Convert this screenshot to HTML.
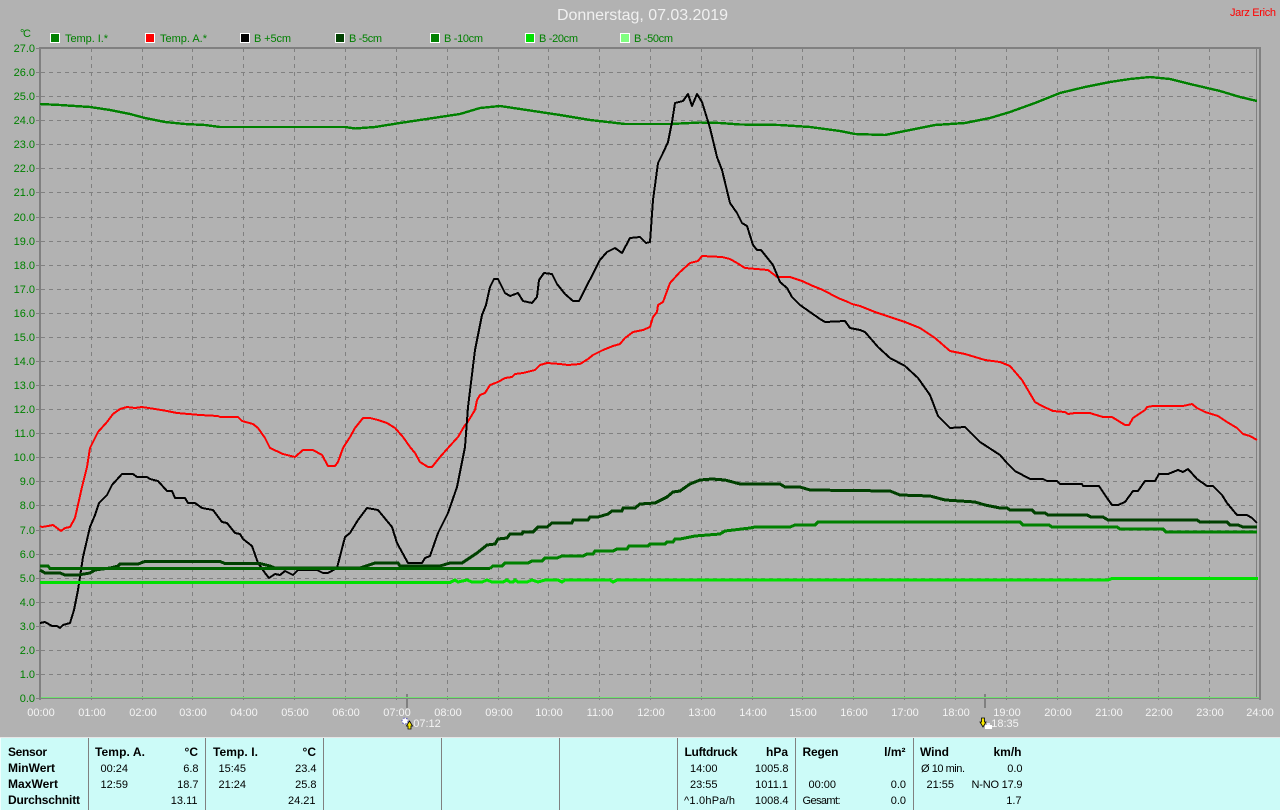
<!DOCTYPE html>
<html>
<head>
<meta charset="utf-8">
<title>Donnerstag, 07.03.2019</title>
<style>
html,body{margin:0;padding:0;width:1280px;height:810px;overflow:hidden;background:#b2b2b2}
svg{display:block;position:absolute;left:0;top:0}
text{font-family:"Liberation Sans",sans-serif;font-size:11px}
.y{fill:#008000;text-anchor:end}
.x{fill:#f4f4f4;text-anchor:middle}
.l{fill:#008000}
.b{font-weight:bold;fill:#000;font-size:12px}
.t{fill:#000}
.r{fill:#000;text-anchor:end}
.br{font-weight:bold;fill:#000;text-anchor:end;font-size:12px}
.c{fill:none;stroke-linejoin:round;shape-rendering:crispEdges}
</style>
</head>
<body>
<svg width="1280" height="810" viewBox="0 0 1280 810" xmlns="http://www.w3.org/2000/svg">
<rect width="1280" height="810" fill="#b2b2b2"/>

<!-- title -->
<text x="557" y="20" textLength="171" style="font-size:16px" fill="#f0f0f0">Donnerstag, 07.03.2019</text>
<text x="1230" y="16" textLength="46" fill="#ff0000">Jarz Erich</text>
<text x="20" y="37" textLength="11" fill="#008000">°C</text>

<!-- legend -->
<g stroke="#fff" stroke-width="1" shape-rendering="crispEdges">
<rect x="50.5" y="33.5" width="9" height="9" fill="#008000"/>
<rect x="145.5" y="33.5" width="9" height="9" fill="#ff0000"/>
<rect x="240.5" y="33.5" width="9" height="9" fill="#000000"/>
<rect x="335.5" y="33.5" width="9" height="9" fill="#004000"/>
<rect x="430.5" y="33.5" width="9" height="9" fill="#008000"/>
<rect x="525.5" y="33.5" width="9" height="9" fill="#00e000"/>
<rect x="620.5" y="33.5" width="9" height="9" fill="#80ff80"/>
</g>
<text class="l" x="65" y="42" textLength="43">Temp. I.*</text>
<text class="l" x="160" y="42" textLength="47">Temp. A.*</text>
<text class="l" x="254" y="42" textLength="37">B +5cm</text>
<text class="l" x="349" y="42" textLength="33">B -5cm</text>
<text class="l" x="444" y="42" textLength="39">B -10cm</text>
<text class="l" x="539" y="42" textLength="39">B -20cm</text>
<text class="l" x="634" y="42" textLength="39">B -50cm</text>

<!-- grid -->
<path shape-rendering="crispEdges" stroke="#808080" stroke-width="1" stroke-dasharray="4 4" fill="none" d="M41 72.5H1257M41 96.5H1257M41 120.5H1257M41 144.5H1257M41 168.5H1257M41 192.5H1257M41 217.5H1257M41 241.5H1257M41 265.5H1257M41 289.5H1257M41 313.5H1257M41 337.5H1257M41 361.5H1257M41 385.5H1257M41 409.5H1257M41 433.5H1257M41 457.5H1257M41 481.5H1257M41 505.5H1257M41 530.5H1257M41 554.5H1257M41 578.5H1257M41 602.5H1257M41 626.5H1257M41 650.5H1257M41 674.5H1257"/>
<path shape-rendering="crispEdges" stroke="#808080" stroke-width="1" stroke-dasharray="4 4" fill="none" d="M91.5 48V704M142.5 48V704M192.5 48V704M243.5 48V704M294.5 48V704M345.5 48V704M396.5 48V704M447.5 48V704M498.5 48V704M548.5 48V704M599.5 48V704M650.5 48V704M701.5 48V704M752.5 48V704M802.5 48V704M853.5 48V704M904.5 48V704M955.5 48V704M1006.5 48V704M1057.5 48V704M1108.5 48V704M1158.5 48V704M1209.5 48V704"/>
<!-- y ticks -->
<path shape-rendering="crispEdges" stroke="#808080" fill="none" d="M36 48.5H40M36 72.5H40M36 96.5H40M36 120.5H40M36 144.5H40M36 168.5H40M36 192.5H40M36 217.5H40M36 241.5H40M36 265.5H40M36 289.5H40M36 313.5H40M36 337.5H40M36 361.5H40M36 385.5H40M36 409.5H40M36 433.5H40M36 457.5H40M36 481.5H40M36 505.5H40M36 530.5H40M36 554.5H40M36 578.5H40M36 602.5H40M36 626.5H40M36 650.5H40M36 674.5H40M36 698.5H40"/>
<!-- frame -->
<g shape-rendering="crispEdges" fill="#808080">
<rect x="39" y="47" width="1222" height="2"/>
<rect x="39" y="47" width="2" height="653"/>
<rect x="1259" y="47" width="2" height="653"/>
<rect x="1256" y="48" width="1" height="650"/>
<rect x="39" y="698" width="1222" height="1"/>
<rect x="406" y="694" width="2" height="14"/>
<rect x="984" y="694" width="2" height="14"/>
</g>

<!-- curves -->
<polyline class="c" stroke="#008000" stroke-width="2.4" points="40,104 60,105 75,106 90,107 110,110 130,114 145,118 165,122 185,124 205,125 220,127 345,127 355,128.5 375,127 400,123 420,120 440,117 460,114 480,108 500,106 520,109 540,112 560,115 590,120 625,124 670,124 700,122.5 720,123 740,124.5 780,125 810,127 840,131 855,134 885,135 905,131 935,125 965,123 990,118 1010,112 1035,103 1060,93 1085,87 1110,82 1130,79 1150,77 1170,79 1190,84 1220,91 1240,97 1257,101"/>
<polyline class="c" stroke="#ff0000" stroke-width="2" points="40,526 42,527 48,526 53,525 61,531 65,528 70,527 75,518 82,487 87,467 90,448 98,432 107,422 113,414 120,409 127,407 135,408 142,407 155,409 167,411 177,413 200,415 218,416 220,417 238,417 242,421 253,424 258,428 265,438 270,448 283,454 295,457 303,450 313,450 322,455 328,466 335,466 338,462 343,448 350,437 355,428 363,418 370,418 378,420 387,423 395,428 403,437 410,447 415,453 420,462 428,467 432,467 440,457 448,448 458,437 465,425 467,423 475,410 477,400 480,395 485,393 490,385 498,382 505,378 512,377 515,374 523,373 535,370 540,365 547,363 560,364 568,365 580,364 588,359 593,355 603,350 613,346 620,344 625,338 633,332 643,330 650,327 653,317 657,312 658,305 663,302 670,283 680,272 690,263 698,261 702,256 722,257 730,259 737,263 745,268 768,270 777,277 790,277 802,281 813,286 823,290 838,298 848,302 852,304 860,306 875,312 890,317 905,322 920,328 935,338 950,351 965,354 985,360 1000,362 1010,366 1022,380 1035,402 1042,406 1053,411 1065,412 1068,414 1075,413 1090,413 1093,414 1103,417 1112,417 1125,425 1129,425 1133,418 1145,410 1147,407 1153,406 1183,406 1192,404 1197,408 1205,412 1218,416 1227,422 1237,428 1243,434 1250,436 1257,440"/>
<polyline class="c" stroke="#000000" stroke-width="2" points="40,623 45,622 52,626 57,626 60,628 63,625 70,623 74,610 78,590 83,557 90,527 95,515 99,503 107,495 112,485 122,474 133,474 137,477 147,477 150,479 158,481 167,491 172,491 175,498 185,498 188,503 195,503 202,508 213,510 222,522 227,523 235,533 240,534 243,539 252,546 258,563 265,573 269,578 275,574 280,575 285,571 293,575 298,570 317,570 323,573 328,573 337,568 345,537 350,533 358,520 367,508 378,510 392,527 397,543 408,563 422,563 425,558 430,556 438,533 448,513 457,487 465,447 468,407 475,350 482,315 486,305 490,287 494,279 498,279 505,293 510,296 518,293 523,301 532,303 537,297 539,280 544,273 552,274 557,284 565,294 573,301 579,301 600,260 607,252 615,248 622,253 630,238 640,237 646,243 650,242 653,200 658,163 663,153 668,142 672,122 675,103 683,101 688,94 692,106 697,94 702,102 710,128 717,157 722,170 730,203 737,213 742,223 747,226 753,245 757,250 761,250 773,265 780,282 787,288 792,297 800,305 820,319 825,322 845,321 850,328 860,330 865,332 878,347 890,358 905,366 918,378 930,395 938,416 950,428 965,427 980,442 1000,455 1007,463 1015,471 1030,479 1043,479 1047,481 1057,481 1060,484 1082,484 1083,486 1099,486 1107,498 1112,505 1118,505 1125,502 1133,491 1138,491 1145,481 1155,481 1159,474 1168,474 1173,472 1178,470 1183,472 1188,469 1197,479 1207,486 1213,486 1222,495 1227,503 1237,515 1247,515 1252,518 1257,523"/>
<polyline class="c" stroke="#004000" stroke-width="3" points="40,570 45,573 60,573 65,575 78,575 90,573 95,570 110,568 118,566 120,564 138,564 145,561.5 220,561.5 225,563.5 260,563.5 270,566 275,568 360,568 363,567 375,563 398,563 400,566 415,566 440,566 450,563 462,563 477,553 487,545 495,544 498,539 507,538 510,534 522,534 523,532 533,532 538,527 547,527 552,523 572,523 573,520 588,520 590,517 598,517 608,514 612,511 622,511 623,508 635,508 640,504 655,503 667,497 673,492 680,491 690,484 700,480 712,479 725,480 740,484 780,484 785,487 800,487 810,490 890,491 900,495 930,496 945,500 975,502 985,505 1000,508 1007,508 1010,510 1032,510 1035,513 1045,513 1048,515 1087,515 1091,517 1103,517 1108,520 1197,520 1200,522 1227,522 1230,525 1238,525 1243,527 1257,527"/>
<polyline class="c" stroke="#006400" stroke-width="3" points="40,566 48,566 50,568.5 490,568.5"/>
<polyline class="c" stroke="#008000" stroke-width="3" points="490,568.5 493,566 502,566 505,563 528,563 532,561 542,561 545,558 557,558 562,556 583,556 587,554 593,554 595,551 613,551 617,549 627,549 629,546 648,546 650,544 665,544 667,542 673,542 675,539 680,539 695,536 720,534 725,531 750,528 755,527 790,527 795,525 815,525 818,522 1020,522 1023,525 1049,525 1052,527 1117,527 1120,529 1163,529 1166,532 1257,532"/>
<polyline class="c" stroke="#00e000" stroke-width="3" points="40,582.5 450,582.5 455,580 458,582 467,580 472,582 482,582 487,580 492,582 503,582 507,580 510,582 513,582 515,580 518,582 527,582 532,580 538,582 545,580 558,580 562,582 565,580 610,580 613,582 617,580 1108,580 1112,578.5 1258,578.5"/>
<rect x="41" y="697" width="1218" height="1" fill="#70e070" shape-rendering="crispEdges"/>

<!-- y labels -->
<text class="y" x="35" y="52">27.0</text>
<text class="y" x="35" y="76">26.0</text>
<text class="y" x="35" y="100">25.0</text>
<text class="y" x="35" y="124">24.0</text>
<text class="y" x="35" y="148">23.0</text>
<text class="y" x="35" y="172">22.0</text>
<text class="y" x="35" y="196">21.0</text>
<text class="y" x="35" y="221">20.0</text>
<text class="y" x="35" y="245">19.0</text>
<text class="y" x="35" y="269">18.0</text>
<text class="y" x="35" y="293">17.0</text>
<text class="y" x="35" y="317">16.0</text>
<text class="y" x="35" y="341">15.0</text>
<text class="y" x="35" y="365">14.0</text>
<text class="y" x="35" y="389">13.0</text>
<text class="y" x="35" y="413">12.0</text>
<text class="y" x="35" y="437">11.0</text>
<text class="y" x="35" y="461">10.0</text>
<text class="y" x="35" y="485">9.0</text>
<text class="y" x="35" y="509">8.0</text>
<text class="y" x="35" y="534">7.0</text>
<text class="y" x="35" y="558">6.0</text>
<text class="y" x="35" y="582">5.0</text>
<text class="y" x="35" y="606">4.0</text>
<text class="y" x="35" y="630">3.0</text>
<text class="y" x="35" y="654">2.0</text>
<text class="y" x="35" y="678">1.0</text>
<text class="y" x="35" y="702">0.0</text>

<!-- x labels -->
<text class="x" x="41" y="716">00:00</text>
<text class="x" x="92" y="716">01:00</text>
<text class="x" x="143" y="716">02:00</text>
<text class="x" x="193" y="716">03:00</text>
<text class="x" x="244" y="716">04:00</text>
<text class="x" x="295" y="716">05:00</text>
<text class="x" x="346" y="716">06:00</text>
<text class="x" x="397" y="716">07:00</text>
<text class="x" x="448" y="716">08:00</text>
<text class="x" x="499" y="716">09:00</text>
<text class="x" x="549" y="716">10:00</text>
<text class="x" x="600" y="716">11:00</text>
<text class="x" x="651" y="716">12:00</text>
<text class="x" x="702" y="716">13:00</text>
<text class="x" x="753" y="716">14:00</text>
<text class="x" x="803" y="716">15:00</text>
<text class="x" x="854" y="716">16:00</text>
<text class="x" x="905" y="716">17:00</text>
<text class="x" x="956" y="716">18:00</text>
<text class="x" x="1007" y="716">19:00</text>
<text class="x" x="1058" y="716">20:00</text>
<text class="x" x="1109" y="716">21:00</text>
<text class="x" x="1159" y="716">22:00</text>
<text class="x" x="1210" y="716">23:00</text>
<text class="x" x="1260" y="716">24:00</text>

<!-- sunrise -->
<circle cx="405" cy="721" r="3" fill="#fff" stroke="#5050c0" stroke-width="1" stroke-dasharray="1.5 1.5"/>
<path d="M409.5 721 L412.5 726 L411 726 L411 729 L408 729 L408 726 L406.5 726 Z" fill="#f8e800" stroke="#000" stroke-width="0.8"/>
<text class="x" x="427" y="727">07:12</text>
<!-- sunset -->
<path d="M981.5 718 L984.5 718 L984.5 722 L986 722 L983 727 L980 722 L981.5 722 Z" fill="#f8e800" stroke="#000" stroke-width="0.8"/>
<rect x="985" y="725" width="7" height="4" fill="#fff"/>
<rect x="987" y="723" width="3" height="2" fill="#e8e8ff"/>
<text class="x" x="1005" y="727">18:35</text>

<!-- table -->
<rect x="0" y="737" width="1280" height="1" fill="#e6e6e6" shape-rendering="crispEdges"/>
<rect x="0" y="738" width="1280" height="72" fill="#ccfbf8" shape-rendering="crispEdges"/>
<rect x="0" y="738" width="1" height="72" fill="#eefefe" shape-rendering="crispEdges"/>
<g fill="#808080" shape-rendering="crispEdges">
<rect x="88" y="738" width="1" height="72"/>
<rect x="205" y="738" width="1" height="72"/>
<rect x="323" y="738" width="1" height="72"/>
<rect x="441" y="738" width="1" height="72"/>
<rect x="559" y="738" width="1" height="72"/>
<rect x="677" y="738" width="1" height="72"/>
<rect x="795" y="738" width="1" height="72"/>
<rect x="913" y="738" width="1" height="72"/>
</g>

<text class="b" x="8" y="756" textLength="39">Sensor</text>
<text class="b" x="8" y="772" textLength="47">MinWert</text>
<text class="b" x="8" y="788" textLength="50">MaxWert</text>
<text class="b" x="8" y="804" textLength="72">Durchschnitt</text>

<text class="b" x="95" y="756" textLength="50">Temp. A.</text>
<text class="br" x="198" y="756">°C</text>
<text class="t" x="100.5" y="772">00:24</text>
<text class="r" x="198.5" y="772">6.8</text>
<text class="t" x="100.5" y="788">12:59</text>
<text class="r" x="198.5" y="788">18.7</text>
<text class="r" x="197.5" y="804">13.11</text>

<text class="b" x="213" y="756" textLength="45">Temp. I.</text>
<text class="br" x="316" y="756">°C</text>
<text class="t" x="218.5" y="772">15:45</text>
<text class="r" x="316.5" y="772">23.4</text>
<text class="t" x="218.5" y="788">21:24</text>
<text class="r" x="316.5" y="788">25.8</text>
<text class="r" x="315.5" y="804">24.21</text>

<text class="b" x="684.5" y="756" textLength="53">Luftdruck</text>
<text class="br" x="788" y="756">hPa</text>
<text class="t" x="690" y="772">14:00</text>
<text class="r" x="788.5" y="772">1005.8</text>
<text class="t" x="690" y="788">23:55</text>
<text class="r" x="788" y="788">1011.1</text>
<text class="t" x="684" y="804" textLength="51">^1.0hPa/h</text>
<text class="r" x="788.5" y="804">1008.4</text>

<text class="b" x="802.5" y="756" textLength="36">Regen</text>
<text class="br" x="905.5" y="756">l/m²</text>
<text class="t" x="808.5" y="788">00:00</text>
<text class="r" x="906" y="788">0.0</text>
<text class="t" x="802.5" y="804" textLength="38">Gesamt:</text>
<text class="r" x="906" y="804">0.0</text>

<text class="b" x="920" y="756" textLength="29">Wind</text>
<text class="br" x="1021.5" y="756">km/h</text>
<text class="t" x="921" y="772" textLength="44">Ø 10 min.</text>
<text class="r" x="1022.5" y="772">0.0</text>
<text class="t" x="926.5" y="788">21:55</text>
<text class="t" x="971.5" y="788" textLength="51">N-NO 17.9</text>
<text class="r" x="1021.5" y="804">1.7</text>
</svg>
</body>
</html>
